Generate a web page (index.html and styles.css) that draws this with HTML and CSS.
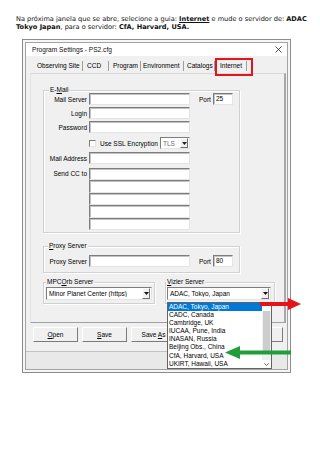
FILE: index.html
```html
<!DOCTYPE html>
<html lang="pt">
<head>
    <meta charset="UTF-8">
    <meta name="viewport" content="width=device-width, initial-scale=1.0">
    <title>Program Settings - PS2.cfg</title>
    <link rel="stylesheet" href="styles.css">
</head>
<body>
    <p class="intro">Na próxima janela que se abre, selecione a guia: <b><u>Internet</u></b> e mude o servidor de: <b>ADAC</b><br><b>Tokyo Japan</b>, para o servidor: <b>CfA, Harvard, USA.</b></p>

    <!-- Dialog window -->
    <div class="window">
        <div class="frame">
            <div class="titlebar">
                <span>Program Settings - PS2.cfg</span>
                <svg class="close" width="7" height="7" viewBox="0 0 7 7"><path d="M0.5 0.5L6.5 6.5M6.5 0.5L0.5 6.5" stroke="#222" stroke-width="0.8"/></svg>
            </div>

            <div class="client">
                <div class="tabs">
                    <div class="tab t1">Observing Site</div>
                    <div class="tab t2">CCD</div>
                    <div class="tab t3">Program</div>
                    <div class="tab t4">Environment</div>
                    <div class="tab t5">Catalogs</div>
                    <div class="tab t6 active">Internet</div>
                </div>

                <div class="tabpage">
                    <!-- E-Mail -->
                    <div class="group email">
                        <span class="gtitle">E-<u>M</u>ail</span>
                        <div class="fields">
                            <div class="row">
                                <span class="lbl">Mail Server</span>
                                <div class="input wide"></div>
                                <span class="port-lbl">Port</span>
                                <div class="input port">25</div>
                            </div>
                            <div class="row">
                                <span class="lbl">Login</span>
                                <div class="input wide"></div>
                            </div>
                            <div class="row">
                                <span class="lbl">Password</span>
                                <div class="input wide"></div>
                            </div>
                            <div class="row ssl">
                                <span class="check"></span>
                                <span class="check-lbl">Use SSL Encryption</span>
                                <div class="combo tls"><span class="combo-text">TLS</span><span class="drop-btn"><svg width="5" height="3" viewBox="0 0 5 3"><path d="M0 0H5L2.5 3Z" fill="#222"/></svg></span></div>
                            </div>
                            <div class="row addr">
                                <span class="lbl">Mail Address</span>
                                <div class="input wide"></div>
                            </div>
                            <div class="row cc">
                                <span class="lbl">Send CC to</span>
                                <div class="cc-list">
                                    <div class="input wide"></div>
                                    <div class="input wide"></div>
                                    <div class="input wide"></div>
                                    <div class="input wide"></div>
                                    <div class="input wide"></div>
                                </div>
                            </div>
                        </div>
                    </div>

                    <!-- Proxy -->
                    <div class="group proxy">
                        <span class="gtitle"><u>P</u>roxy Server</span>
                        <div class="row">
                            <span class="lbl">Proxy Server</span>
                            <div class="input wide"></div>
                            <span class="port-lbl">Port</span>
                            <div class="input port">80</div>
                        </div>
                    </div>

                    <!-- Servers -->
                    <div class="servers">
                        <div class="group mpc">
                            <span class="gtitle">MPC<u>O</u>rb Server</span>
                            <div class="combo"><span class="combo-text">Minor Planet Center (https)</span><span class="drop-btn"><svg width="5" height="3" viewBox="0 0 5 3"><path d="M0 0H5L2.5 3Z" fill="#111"/></svg></span></div>
                        </div>
                        <div class="group vizier">
                            <span class="gtitle"><u>V</u>izier Server</span>
                            <div class="combo open">
                                <span class="combo-text">ADAC, Tokyo, Japan</span>
                                <span class="drop-btn"><svg width="5" height="3" viewBox="0 0 5 3"><path d="M0 0H5L2.5 3Z" fill="#111"/></svg></span>
                                <div class="droplist">
                                    <ul class="items">
                                        <li class="selected">ADAC, Tokyo, Japan</li>
                                        <li>CADC, Canada</li>
                                        <li>Cambridge, UK</li>
                                        <li>IUCAA, Pune, India</li>
                                        <li>INASAN, Russia</li>
                                        <li>Beijing Obs., China</li>
                                        <li>CfA, Harvard, USA</li>
                                        <li>UKIRT, Hawaii, USA</li>
                                    </ul>
                                    <div class="scrollbar">
                                        <span class="sb-btn"></span>
                                        <span class="sb-thumb"></span>
                                        <span class="sb-track"></span>
                                        <span class="sb-btn"><svg width="5" height="3" viewBox="0 0 5 3"><path d="M0.3 0.3L2.5 2.5L4.7 0.3" stroke="#444" stroke-width="0.8" fill="none"/></svg></span>
                                    </div>
                                </div>
                            </div>
                        </div>
                    </div>
                </div>

                <!-- the last two buttons sit under the open list -->
                <div class="buttons">
                    <div class="btn"><u>O</u>pen</div>
                    <div class="btn"><u>S</u>ave</div>
                    <div class="btn">Save <u>A</u>s</div>
                    <div class="btn push"></div>
                    <div class="btn"></div>
                </div>
            </div>
            <div class="footer"></div>
        </div>
    </div>

    <!-- Annotation arrows -->
    <svg class="arrow red-arrow" width="44" height="14" viewBox="0 0 44 14"><path d="M2 5H30V1L43 7L30 13V9H2Z" fill="#e3151a"/></svg>
    <svg class="arrow green-arrow" width="68" height="15" viewBox="0 0 68 15"><path d="M1 7.5L16 1V5.5H67V9.5H16V14Z" fill="#1f9e3b"/></svg>
</body>
</html>
```

FILE: styles.css
```css
/* Page */
* {
    box-sizing: border-box;
}

body {
    margin: 0;
    width: 320px;
    height: 453px;
    position: relative;
    overflow: hidden;
    background: #fff;
    color: #000;
    font-family: "Liberation Sans", Arial, sans-serif;
}

.intro {
    height: 39px;
    margin: 0;
    padding: 15px 0 0 16px;
    font-family: "DejaVu Sans", Verdana, sans-serif;
    font-size: 6.6px;
    line-height: 8px;
    color: #111;
    white-space: nowrap;
}

/* Window frame */
.window {
    margin-left: 22px;
    width: 269px;
    height: 334px;
    padding: 2px;
    border: 1px solid #8c8c8c;
    background: #f6f6f6;
}

.frame {
    height: 100%;
    display: flex;
    flex-direction: column;
    border: 1px solid #a3a3a3;
    font-size: 6.5px;
}

.titlebar {
    flex: none;
    height: 13px;
    display: flex;
    align-items: center;
    justify-content: space-between;
    padding: 0 5px 0 6px;
    background: #fff;
    font-size: 6.6px;
    color: #111;
}

.client {
    flex: none;
    padding: 3px 4px 9px 4px;
    background: #f0f0f0;
}

/* Tabs */
.tabs {
    display: flex;
    height: 14px;
    padding-left: 3px;
}

.tab {
    height: 10px;
    margin-top: 2px;
    line-height: 10px;
    padding-left: 4px;
    border-right: 1px solid #9d9d9d;
    white-space: nowrap;
}

.t1 { width: 50px; }
.t2 { width: 26px; }
.t3 { width: 32px; }
.t4 { width: 43px; padding-left: 2px; }
.t5 { width: 31px; padding-left: 3px; }
.t6 { width: 32px; padding-left: 5px; }

.tab.active {
    position: relative;
}

/* red highlight drawn over the tab */
.tab.active::after {
    content: "";
    position: absolute;
    left: 0;
    top: -3px;
    width: 34px;
    height: 14px;
    border: 2px solid #e3151a;
}

.tabpage {
    height: 250px;
    width: 256px;
    padding: 16px 0 0 12px;
    border-top: 1px solid #d9d9d9;
    border-left: 1px solid #e2e2e2;
    border-right: 2px solid #a8a8a8;
    border-bottom: 1px solid #a0a0a0;
}

/* Group boxes */
.group {
    border: 1px solid #d0d0d0;
    box-shadow: 1px 1px 0 #fff, inset 1px 1px 0 #fff;
}

.gtitle {
    display: block;
    width: max-content;
    height: 8px;
    margin: -5px 0 0 5px;
    padding: 0 1px;
    line-height: 8px;
    background: #f0f0f0;
}

.email {
    width: 197px;
    height: 143px;
}

.fields {
    display: flex;
    flex-direction: column;
    gap: 2px;
    margin-top: -1px;
}

.row {
    display: flex;
    align-items: center;
    height: 12px;
}

.lbl {
    width: 43px;
    margin-right: 2px;
    text-align: right;
    white-space: nowrap;
}

.input {
    height: 12px;
    padding-left: 2px;
    line-height: 10px;
    background: #fff;
    border: 1px solid;
    border-color: #7d7d7d #e4e4e4 #e4e4e4 #7d7d7d;
    box-shadow: inset 1px 1px 0 #c2c2c2;
}

.wide {
    width: 101px;
}

.port-lbl {
    width: 12px;
    margin-left: 9px;
}

.port {
    width: 20px;
    margin-left: 2px;
}

.ssl {
    margin-top: 2px;
    padding-left: 45px;
}

.check {
    width: 7px;
    height: 7px;
    margin-right: 4px;
    background: #fff;
    border: 1px solid;
    border-color: #7d7d7d #e4e4e4 #e4e4e4 #7d7d7d;
}

.check-lbl {
    width: 60px;
    white-space: nowrap;
}

.addr {
    margin-top: 1px;
}

.cc {
    height: auto;
    margin-top: 2px;
    align-items: flex-start;
}

.cc .lbl {
    line-height: 12px;
}

.cc-list .input {
    height: 12.4px;
}

/* Combo boxes */
.combo {
    display: flex;
    align-items: center;
    height: 13px;
    background: #fff;
    border: 1px solid;
    border-color: #7d7d7d #e4e4e4 #e4e4e4 #7d7d7d;
    white-space: nowrap;
}

.combo-text {
    flex: 1;
    padding-left: 2px;
    overflow: hidden;
}

.drop-btn {
    width: 8px;
    height: 100%;
    margin-right: 1px;
    display: flex;
    align-items: center;
    justify-content: center;
    background: #f0f0f0;
    border: 1px solid;
    border-color: #fff #6f6f6f #6f6f6f #fff;
}

.tls {
    width: 30px;
    height: 12px;
    color: #6d6d6d;
}

.proxy {
    width: 197px;
    height: 27px;
    margin-top: 13px;
}

.proxy .gtitle {
    margin-left: 4px;
}

.proxy .row {
    margin-top: 5px;
}

.servers {
    display: flex;
    gap: 10px;
    margin-top: 9px;
}

.mpc {
    width: 112px;
    height: 22px;
}

.mpc .gtitle {
    margin-left: 2px;
}

.mpc .combo {
    width: 106px;
    margin: 1px 0 0 2px;
}

.vizier {
    width: 110px;
    height: 22px;
}

.vizier .gtitle {
    margin-left: 0;
}

.vizier .combo {
    position: relative;
    width: 104px;
    margin: 1px 0 0 1px;
}

/* Open drop-down list */
.droplist {
    position: absolute;
    left: -1px;
    top: 14px;
    z-index: 2;
    width: 105px;
    height: 67px;
    display: flex;
    background: #fff;
    border: 1px solid #646464;
}

.items {
    flex: 1;
    margin: 0;
    padding: 0;
    list-style: none;
}

.items li {
    height: 8.1px;
    line-height: 8.1px;
    padding-left: 1px;
}

.items li.selected {
    background: #0078d7;
    color: #fff;
}

.scrollbar {
    width: 9px;
    display: flex;
    flex-direction: column;
    background: #f0f0f0;
}

.sb-btn {
    height: 8px;
    display: flex;
    align-items: center;
    justify-content: center;
    background: #fff;
}

.sb-thumb {
    height: 41px;
    margin: 0 1px;
    background: #cdcdcd;
}

.sb-track {
    flex: 1;
}

/* Bottom buttons */
.buttons {
    display: flex;
    gap: 4px;
    height: 15px;
    margin-top: 4px;
    padding-left: 3px;
}

.btn {
    width: 45px;
    height: 15px;
    line-height: 13px;
    text-align: center;
    background: #f0f0f0;
    border: 1px solid;
    border-color: #fff #7a7a7a #7a7a7a #fff;
}

.btn.push {
    margin-left: auto;
}

.footer {
    flex: 1;
    background: #e9e9e9;
    border-top: 1px solid #c2c2c2;
}

/* Annotation arrows */
.arrow {
    position: absolute;
    z-index: 5;
}

.red-arrow {
    left: 258px;
    top: 297px;
}

.green-arrow {
    left: 224px;
    top: 345px;
}
```
